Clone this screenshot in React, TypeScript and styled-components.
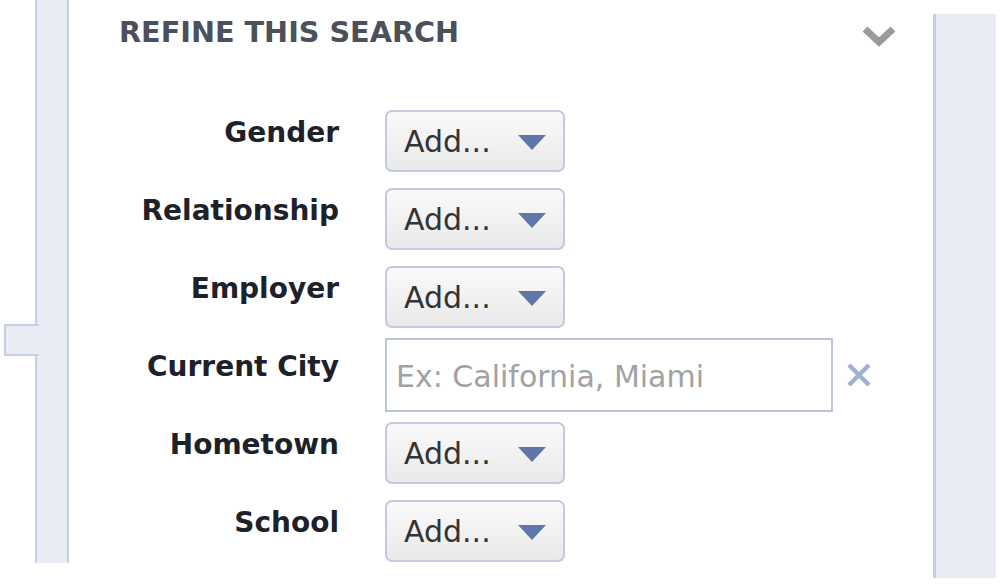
import React from "react";
import styled, { createGlobalStyle } from "styled-components";

const GlobalStyle = createGlobalStyle`
  html, body {
    margin: 0;
    padding: 0;
    background: #fff;
  }
  body {
    font-family: "DejaVu Sans", "Open Sans", sans-serif;
  }
`;

const Page = styled.div`
  width: 1000px;
  height: 585px;
  display: flex;
  overflow: hidden;
  background: #fff;
`;

const LeftRail = styled.div`
  position: relative;
  flex: 0 0 30px;
  height: 563px;
  margin-left: 35px;
  background: #e9ecf4;
  border-left: 2px solid #c6cee3;
  border-right: 2px solid #c6cee3;

  /* little tab sticking out on the left */
  &::before {
    content: "";
    position: absolute;
    left: -33px;
    top: 324px;
    width: 33px;
    height: 28px;
    background: #e9ecf4;
    border-top: 2px solid #c6cee3;
    border-bottom: 2px solid #c6cee3;
    border-left: 2px solid #c6cee3;
  }
`;

const Panel = styled.div`
  flex: 1;
  display: flex;
  flex-direction: column;
  padding: 12px 36px 0 50px;
`;

const Header = styled.div`
  display: flex;
  align-items: center;
  justify-content: space-between;
  height: 40px;
`;

const Title = styled.h2`
  margin: 0;
  font-size: 28.7px;
  font-weight: 700;
  color: #4b505a;
`;

const Chevron = styled.svg`
  width: 36px;
  height: 26px;
  margin-top: 8px;
`;

const Form = styled.div`
  display: grid;
  grid-template-columns: 220px auto;
  grid-auto-rows: 62px;
  column-gap: 46px;
  row-gap: 16px;
  margin-top: 58px;
  align-items: start;
  justify-items: start;
`;

const Label = styled.div`
  justify-self: end;
  padding-top: 5px;
  font-size: 28px;
  line-height: 36px;
  font-weight: 700;
  color: #1d2129;
  white-space: nowrap;
`;

const AddButton = styled.button`
  display: flex;
  align-items: center;
  gap: 27px;
  height: 62px;
  width: 180px;
  padding: 0 0 0 17px;
  border: 2px solid #c1cae0;
  border-radius: 7px;
  background: linear-gradient(#fafafa, #e9e9e9);
  font-family: "DejaVu Sans", "Open Sans", sans-serif;
  font-size: 30px;
  color: #333;
`;

const Caret = styled.span`
  width: 0;
  height: 0;
  border-left: 14px solid transparent;
  border-right: 14px solid transparent;
  border-top: 15px solid #5f76ab;
  margin-top: 2px;
`;

const InputRow = styled.div`
  display: flex;
  align-items: center;
  gap: 12px;
  margin: -6px 0;
`;

const CityInput = styled.input`
  width: 448px;
  height: 74px;
  box-sizing: border-box;
  padding: 2px 9px 0;
  border: 2px solid #bcc6da;
  font-family: "DejaVu Sans", "Open Sans", sans-serif;
  font-size: 30px;
  color: #333;
  outline: none;

  &::placeholder {
    color: #a2a2a2;
  }
`;

const ClearIcon = styled.svg`
  width: 28px;
  height: 28px;
`;

const RightRail = styled.div`
  flex: 0 0 60px;
  height: 564px;
  margin-top: 14px;
  margin-right: 4px;
  background: #e8ebf4;
  border-left: 3px solid #c6cee3;
`;

const fields = ["Gender", "Relationship", "Employer", "Current City", "Hometown", "School"];

export default function App() {
  return (
    <Page>
      <GlobalStyle />
      <LeftRail />
      <Panel>
        <Header>
          <Title>REFINE THIS SEARCH</Title>
          <Chevron viewBox="0 0 36 26">
            <path d="M4 6 L18 19 L32 6" fill="none" stroke="#9b9b9b" strokeWidth="7" />
          </Chevron>
        </Header>
        <Form>
          {fields.map((f) => (
            <React.Fragment key={f}>
              <Label>{f}</Label>
              {f === "Current City" ? (
                <InputRow>
                  <CityInput placeholder="Ex: California, Miami" />
                  <ClearIcon viewBox="0 0 28 28">
                    <path d="M4 4 L24 24 M24 4 L4 24" stroke="#9fb0d0" strokeWidth="4.5" />
                  </ClearIcon>
                </InputRow>
              ) : (
                <AddButton>
                  Add...
                  <Caret />
                </AddButton>
              )}
            </React.Fragment>
          ))}
        </Form>
      </Panel>
      <RightRail />
    </Page>
  );
}
